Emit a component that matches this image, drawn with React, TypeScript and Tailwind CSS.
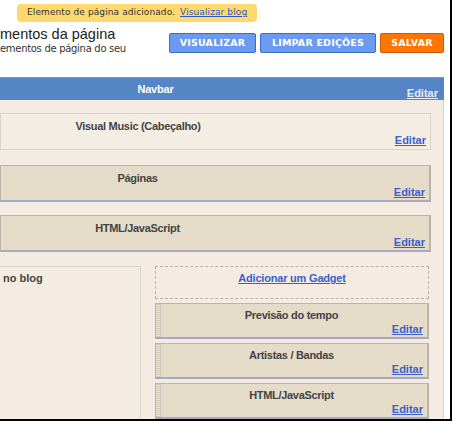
import React from "react";

const ui = { fontFamily: '"DejaVu Sans", Verdana, sans-serif' };
const ar = { fontFamily: '"Liberation Sans", Arial, sans-serif' };

function Editar({ className = "" }: { className?: string }) {
  return (
    <a className={`font-bold text-[11px] underline text-[#3c5fc8] ${className}`} style={ar}>
      Editar
    </a>
  );
}

function Widget({ title, dark = true, titlePad = "pr-[155px]" }: { title: string; dark?: boolean; titlePad?: string }) {
  return (
    <div
      className={`h-[37px] w-[431px] flex flex-col border ${
        dark
          ? "bg-[#e4dbc9] border-[#bcb4a8] border-b-[#a9a8bd] border-b-2 border-r-2"
          : "bg-[#f4ede4] border-[#d8d3cb]"
      }`}
    >
      <div
        className={`text-center font-bold text-[11px] tracking-[-0.3px] text-[#444] pt-[5px] leading-[14px] ${titlePad}`}
        style={ar}
      >
        {title}
      </div>
      <div className="flex-1" />
      <div className="flex justify-end pr-[4px] pb-[2px] leading-[14px]">
        <Editar />
      </div>
    </div>
  );
}

function Gadget({ title }: { title: string }) {
  return (
    <div className="h-[36px] flex bg-[#e4dbc9] border border-[#bcb4a8] border-b-2 border-b-[#a9a8bd] border-r-2">
      <div className="w-[5px] h-full border-r border-[#cfc7ba] bg-[repeating-linear-gradient(0deg,#cfc6b8_0px,#cfc6b8_1px,#ece6dc_1px,#ece6dc_2px)]" />
      <div className="flex-1 flex flex-col">
        <div
          className="text-center font-bold text-[11px] tracking-[-0.3px] text-[#444] pt-[4px] leading-[14px] pr-[5px]"
          style={ar}
        >
          {title}
        </div>
        <div className="flex-1" />
        <div className="flex justify-end pr-[4px] pb-[1px] leading-[14px]">
          <Editar />
        </div>
      </div>
    </div>
  );
}

export default function App() {
  return (
    <div className="w-[452px] h-[421px] bg-white overflow-hidden border-r-2 border-b-2 border-black box-border flex flex-col">
      {/* Top notice */}
      <div className="pt-[4px] pl-[17px] h-[22px] flex items-start">
        <div
          className="flex items-center h-[18px] px-[10px] rounded-[4px] bg-[#ffd86e] text-[9px] tracking-[0.1px] text-[#333] whitespace-nowrap"
          style={ui}
        >
          <span>Elemento de página adicionado.</span>
          <a className="ml-[5px] underline text-[#2f57c9]">Visualizar blog</a>
        </div>
      </div>

      {/* Title + buttons */}
      <div className="flex h-[55px]">
        <div className="w-[169px] pt-[3px] whitespace-nowrap overflow-hidden">
          <div className="text-[14.5px] leading-[19px] text-[#222]" style={ar}>
            mentos da página
          </div>
          <div className="text-[10px] leading-[10px] text-[#333] tracking-[-0.3px]" style={ui}>
            ementos de página do seu
          </div>
        </div>
        <div className="flex gap-[4px] pt-[11px] items-start">
          <button
            className="h-[20px] w-[87px] bg-[#6b9af0] border border-[#3d6bc9] rounded-[2px] text-white font-bold text-[9.5px] tracking-[0.2px]"
            style={ui}
          >
            VISUALIZAR
          </button>
          <button
            className="h-[20px] w-[116px] bg-[#6b9af0] border border-[#3d6bc9] rounded-[2px] text-white font-bold text-[9.5px] tracking-[0.2px]"
            style={ui}
          >
            LIMPAR EDIÇÕES
          </button>
          <button
            className="h-[20px] w-[64px] bg-[#ff7500] border border-[#c85a10] rounded-[2px] text-white font-bold text-[9.5px] tracking-[0.2px]"
            style={ui}
          >
            SALVAR
          </button>
        </div>
      </div>

      {/* Navbar */}
      <div className="w-[444px] h-[23px] bg-[#5585c4] border-t border-[#6f97cf] flex items-start">
        <div
          className="w-[311px] text-center font-bold text-white text-[11px] tracking-[-0.2px] pt-[4px] leading-[14px]"
          style={ar}
        >
          Navbar
        </div>
        <div className="flex-1 flex justify-end pr-[6px] pt-[8px] leading-[14px]">
          <a className="font-bold text-[11px] underline text-[#e8eef8]" style={ar}>
            Editar
          </a>
        </div>
      </div>

      {/* Main */}
      <div className="w-[444px] flex-1 bg-[#f4ece2] border-r border-[#d9d3ca] pt-[13px] flex flex-col">
        <Widget title="Visual Music (Cabeçalho)" dark={false} />
        <div className="h-[15px]" />
        <Widget title="Páginas" />
        <div className="h-[13px]" />
        <Widget title="HTML/JavaScript" />
        <div className="h-[14px]" />
        <div className="flex flex-1">
          <div className="w-[141px] border border-l-0 border-b-0 border-[#d8d3cb]">
            <div className="pl-[3px] pt-[4px] font-bold text-[11px] leading-[14px] text-[#444]" style={ar}>
              no blog
            </div>
          </div>
          <div className="ml-[14px] w-[274px] flex flex-col gap-[4px]">
            <div className="h-[33px] border border-dashed border-[#b9b3aa] text-center pt-[2px] leading-[14px]">
              <a className="font-bold text-[11px] tracking-[-0.2px] underline text-[#3c5fc8]" style={ar}>
                Adicionar um Gadget
              </a>
            </div>
            <Gadget title="Previsão do tempo" />
            <Gadget title="Artistas / Bandas" />
            <Gadget title="HTML/JavaScript" />
          </div>
        </div>
      </div>
    </div>
  );
}
